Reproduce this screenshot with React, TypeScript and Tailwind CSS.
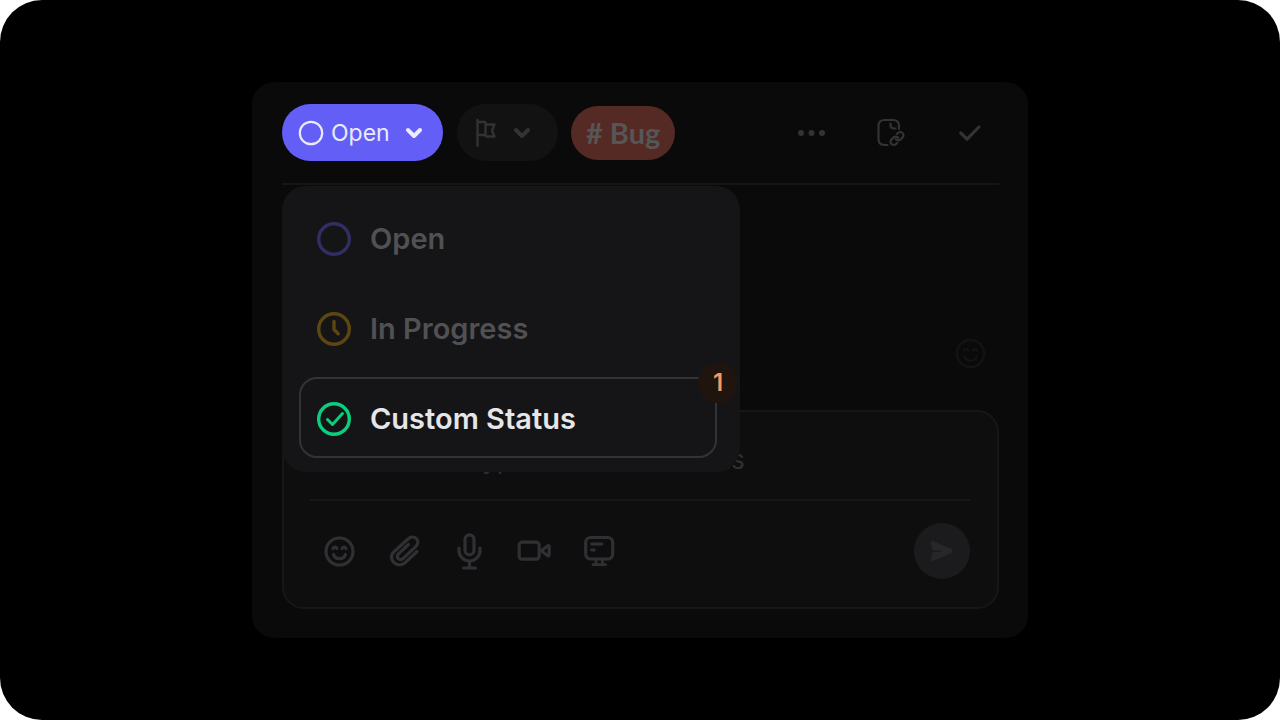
import type { ReactNode } from "react";

function Chevron() {
  return (
    <svg className="h-3 w-5" viewBox="0 0 20 12" fill="none" stroke="currentColor" strokeWidth="4" strokeLinecap="round" strokeLinejoin="round" aria-hidden="true">
      <path d="M4 3l6 6 6-6" />
    </svg>
  );
}

function SmileShapes() {
  return (
    <>
      <circle cx="17.5" cy="20.5" r="13.5" />
      <path d="M11 17.500c.6-2 3.400-2 4 0M20 17.500c.6-2 3.400-2 4 0M11.500 23.500c1.500 5.500 10.500 5.500 12 0" />
    </>
  );
}

function ToolButton({ label, children }: { label: string; children: ReactNode }) {
  return (
    <button type="button" aria-label={label} className="h-10 w-9 text-[#303034]">
      <svg className="h-10 w-9" viewBox="0 0 36 40" fill="none" stroke="currentColor" strokeWidth="3.2" strokeLinecap="round" strokeLinejoin="round" aria-hidden="true">
        {children}
      </svg>
    </button>
  );
}

function MenuItem({ label, color, selected, mark, badge }: { label: string; color: string; selected?: boolean; mark?: ReactNode; badge?: string }) {
  return (
    <li className="relative">
      <button
        type="button"
        aria-pressed={!!selected}
        className={`flex h-[81px] w-full items-center gap-[19px] rounded-[18px] border-2 px-4 pt-[3px] text-left text-[29px] font-semibold ${
          selected ? "border-[#333335] text-[#e6e6e8]" : "border-transparent text-[#515153]"
        }`}
      >
        <svg className={`size-[34px] shrink-0 ${color}`} viewBox="0 0 34 34" fill="none" stroke="currentColor" strokeWidth="3.4" strokeLinecap="round" strokeLinejoin="round" aria-hidden="true">
          <circle cx="17" cy="17" r="15.3" />
          {mark}
        </svg>
        {label}
      </button>
      {badge && (
        <span className="absolute -top-[14px] -right-[21px] flex size-10 items-center justify-center rounded-full bg-[#1f140e] text-2xl font-semibold text-[#fb9660]">
          {badge}
        </span>
      )}
    </li>
  );
}

export default function App() {
  return (
    <div className="bg-white font-['Inter','Liberation_Sans',sans-serif]">
      <main className="flex min-h-screen items-center justify-center rounded-[42px] bg-black">
        <section className="relative w-full max-w-[776px] rounded-[22px] bg-[#0a0a0a] pt-[22px] pr-[29px] pb-[29px] pl-[30px]">
          <header className="flex items-center border-b-2 border-[#151515] pb-[22px]">
            <button type="button" className="flex h-[57px] items-center rounded-full bg-[#635ff6] pr-[19px] pl-4 text-[#ebeafe]">
              <svg className="size-[26px]" viewBox="0 0 26 26" fill="none" stroke="currentColor" strokeWidth="2.2" aria-hidden="true">
                <circle cx="13" cy="13" r="11.200" />
              </svg>
              <span className="ml-[7px] w-[61px] text-left text-[23px] leading-7">Open</span>
              <span className="ml-3">
                <Chevron />
              </span>
            </button>
            <button type="button" aria-label="Priority" className="ml-[14px] flex h-[57px] items-center gap-[14px] rounded-full bg-[#121212] pr-[26px] pl-[17px] text-[#333335]">
              <svg className="h-[30px] w-6" viewBox="0 0 24 30" fill="none" stroke="currentColor" strokeWidth="2.300" strokeLinecap="round" strokeLinejoin="round" aria-hidden="true">
                <path d="M3.500 2v26M4 4h6.500q1 0 1 1v12H4M11.500 6.500h9l-2.500 6 2.500 6h-8q-1 0-1-1.500" />
              </svg>
              <Chevron />
            </button>
            <button type="button" className="ml-[13px] h-[54px] rounded-full bg-[#552a25] px-[15px] font-['Lato','Inter',sans-serif] text-[29px] font-bold text-[#565656]">
              # Bug
            </button>
            <div className="ml-auto flex items-center gap-[50px] pr-[17px] text-[#333336]">
              <button type="button" aria-label="More options">
                <svg className="h-8 w-7" viewBox="0 0 28 32" fill="currentColor" aria-hidden="true">
                  <circle cx="3" cy="16" r="3" />
                  <circle cx="13.500" cy="16" r="3" />
                  <circle cx="24" cy="16" r="3" />
                </svg>
              </button>
              <button type="button" aria-label="Copy link">
                <svg className="size-8" viewBox="0 0 32 32" fill="none" stroke="currentColor" strokeWidth="2.200" strokeLinecap="round" strokeLinejoin="round" aria-hidden="true">
                  <path d="M11.500 28H8.500q-6 0-6-6V9q0-6 6-6h8.500q6 0 6 6v3M14.500 6.500V8q0 3.500 3.500 3.500H19.500" />
                  <g transform="translate(13.200 13.700) scale(.65)" strokeWidth="3.400">
                    <path d="M10 13a5 5 0 0 0 7.540.54l3-3a5 5 0 0 0-7.070-7.070l-1.720 1.710" />
                    <path d="M14 11a5 5 0 0 0-7.540-.54l-3 3a5 5 0 0 0 7.070 7.070l1.710-1.710" />
                  </g>
                </svg>
              </button>
              <button type="button" aria-label="Resolve">
                <svg className="h-8 w-6" viewBox="0 0 24 32" fill="none" stroke="currentColor" strokeWidth="3.200" strokeLinecap="round" strokeLinejoin="round" aria-hidden="true">
                  <path d="M2.800 16l6.200 6.200L21 10" />
                </svg>
              </button>
            </div>
          </header>

          <div className="flex h-[225px] flex-col items-end justify-end pr-[10px] pb-[37px]">
            <button type="button" aria-label="Add reaction" className="text-[#131314]">
              <svg className="h-10 w-9" viewBox="0 0 36 40" fill="none" stroke="currentColor" strokeWidth="2.500" strokeLinecap="round" aria-hidden="true">
                <SmileShapes />
              </svg>
            </button>
          </div>

          <form className="rounded-[22px] border-2 border-[#171718] bg-[#0e0e0e] pr-[27px] pb-[28px] pl-[26px]">
            <input
              type="text"
              aria-label="Comment"
              placeholder="Comment or type '/' for commands"
              className="block h-[89px] w-full border-b-2 border-[#171718] bg-transparent pt-2 pl-1 text-[26px] text-[#e6e6e8] outline-none placeholder:text-[#303031]"
            />
            <div className="flex items-center pt-[22px] pl-3">
              <div className="flex gap-[29px]">
                <ToolButton label="Emoji">
                  <SmileShapes />
                </ToolButton>
                <ToolButton label="Attach file">
                  <path d="M30 20.500L18.500 31.400C10 38.500-.5 27.500 7 20.700L21 8C27.500 2.500 34.500 10 28.500 15.800L16.500 27.200C12.500 30.500 8 26.500 11.500 22.800L21.500 13.500" />
                </ToolButton>
                <ToolButton label="Record audio">
                  <rect x="13" y="3.800" width="9" height="20" rx="4.500" />
                  <path d="M7 17v2.500a10.500 10.500 0 0 0 21 0V17M17.500 30.500v6M11.500 37h12" />
                </ToolButton>
                <ToolButton label="Record video">
                  <rect x="2.200" y="11.200" width="20" height="17" rx="3" />
                  <path d="M24.200 19.700L30.500 15q1.700-1 1.700 1v7.500q0 2-1.700 1z" />
                </ToolButton>
                <ToolButton label="Share screen">
                  <rect x="3.700" y="6.500" width="27" height="21.500" rx="5" />
                  <path strokeWidth="2.800" d="M9.500 13h10.500M9.500 19h2.800M14 28v5.500M20.500 28v5.500M11 33.700h12.500" />
                </ToolButton>
              </div>
              <button type="submit" aria-label="Send" className="ml-auto flex size-14 items-center justify-center rounded-full bg-[#1b1b1d] text-[#272729]">
                <svg className="size-6" viewBox="0 0 24 24" fill="currentColor" aria-hidden="true">
                  <path d="M1 4Q.5 1 3.500 2.200L21.500 10Q24 12 21.500 14L3.500 21.800Q.5 23 1 20L2.500 13H11v-1.500H2.500z" />
                </svg>
              </button>
            </div>
          </form>

          <ul className="absolute top-[104px] left-[30px] flex w-[458px] flex-col gap-[9px] rounded-[24px] bg-[#151517] pt-[11px] pr-[23px] pb-[14px] pl-[17px]">
            <MenuItem label="Open" color="text-[#302e62]" />
            <MenuItem label="In Progress" color="text-[#5c4710]" mark={<path d="M17 9.500v8l4.200 4.200" />} />
            <MenuItem label="Custom Status" color="text-[#0bcf7e]" selected badge="1" mark={<path strokeWidth="3" d="M10.500 17.500l5 5 10-11" />} />
          </ul>
        </section>
      </main>
    </div>
  );
}
